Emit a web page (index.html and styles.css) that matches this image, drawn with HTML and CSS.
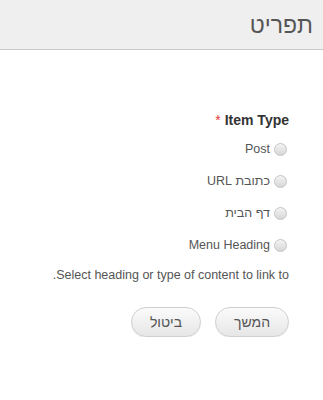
FILE: index.html
```html
<!DOCTYPE html>
<html lang="he" dir="rtl">
<head>
<meta charset="utf-8">
<link rel="stylesheet" href="styles.css">
</head>
<body>
<header class="top">
  <h1 class="title">תפריט</h1>
</header>
<main class="content">
  <div class="field-label"><span class="ltr">Item Type</span> <span class="req">*</span></div>
  <ul class="options">
    <li class="opt"><span class="radio"></span><span class="opt-text">Post</span></li>
    <li class="opt"><span class="radio"></span><span class="opt-text">כתובת URL</span></li>
    <li class="opt"><span class="radio"></span><span class="opt-text">דף הבית</span></li>
    <li class="opt"><span class="radio"></span><span class="opt-text">Menu Heading</span></li>
  </ul>
  <p class="hint">Select heading or type of content to link to.</p>
  <div class="actions">
    <button class="btn">המשך</button>
    <button class="btn">ביטול</button>
  </div>
</main>
</body>
</html>
```
FILE: styles.css
```css
html, body {
  margin: 0;
  padding: 0;
  background: #fff;
  font-family: "Liberation Sans", Arial, sans-serif;
  color: #555;
}
.top {
  height: 49px;
  background: #efefef;
  border-bottom: 1px solid #c8c8c8;
  display: flex;
  align-items: center;
  padding-right: 10px;
  box-sizing: content-box;
}
.title {
  margin: 0;
  font-weight: normal;
  font-size: 23px;
  color: #555;
  line-height: 1;
  padding-top: 2px;
}
.content {
  padding: 62px 34px 0 0;
}
.field-label {
  font-size: 14px;
  font-weight: bold;
  color: #333;
  line-height: 16px;
}
.req {
  color: #e23b3b;
  font-weight: normal;
}
.ltr {
  direction: ltr;
  unicode-bidi: isolate;
}
.options {
  list-style: none;
  margin: 13px 0 0;
  padding: 0;
  display: flex;
  flex-direction: column;
  gap: 16px;
}
.opt {
  display: flex;
  align-items: center;
  gap: 4px;
  font-size: 12.5px;
  line-height: 16px;
  padding-right: 2px;
}
.radio {
  width: 11px;
  height: 11px;
  border-radius: 50%;
  border: 1px solid #c4c4c4;
  background: linear-gradient(#f4f4f4, #d6d6d6);
  flex: none;
}
.hint {
  margin: 14px 0 0;
  font-size: 12.5px;
  line-height: 16px;
  color: #555;
}
.actions {
  margin-top: 24px;
  display: flex;
  gap: 14px;
}
.btn {
  font-family: inherit;
  height: 30px;
  border-radius: 15px;
  border: 1px solid #cfcfcf;
  background: linear-gradient(#fbfbfb, #e6e6e6);
  box-shadow: 0 1px 1px rgba(0,0,0,0.08);
  font-size: 14px;
  color: #555;
  padding: 0;
  width: 74px;
}
.btn + .btn {
  width: 70px;
}
```
